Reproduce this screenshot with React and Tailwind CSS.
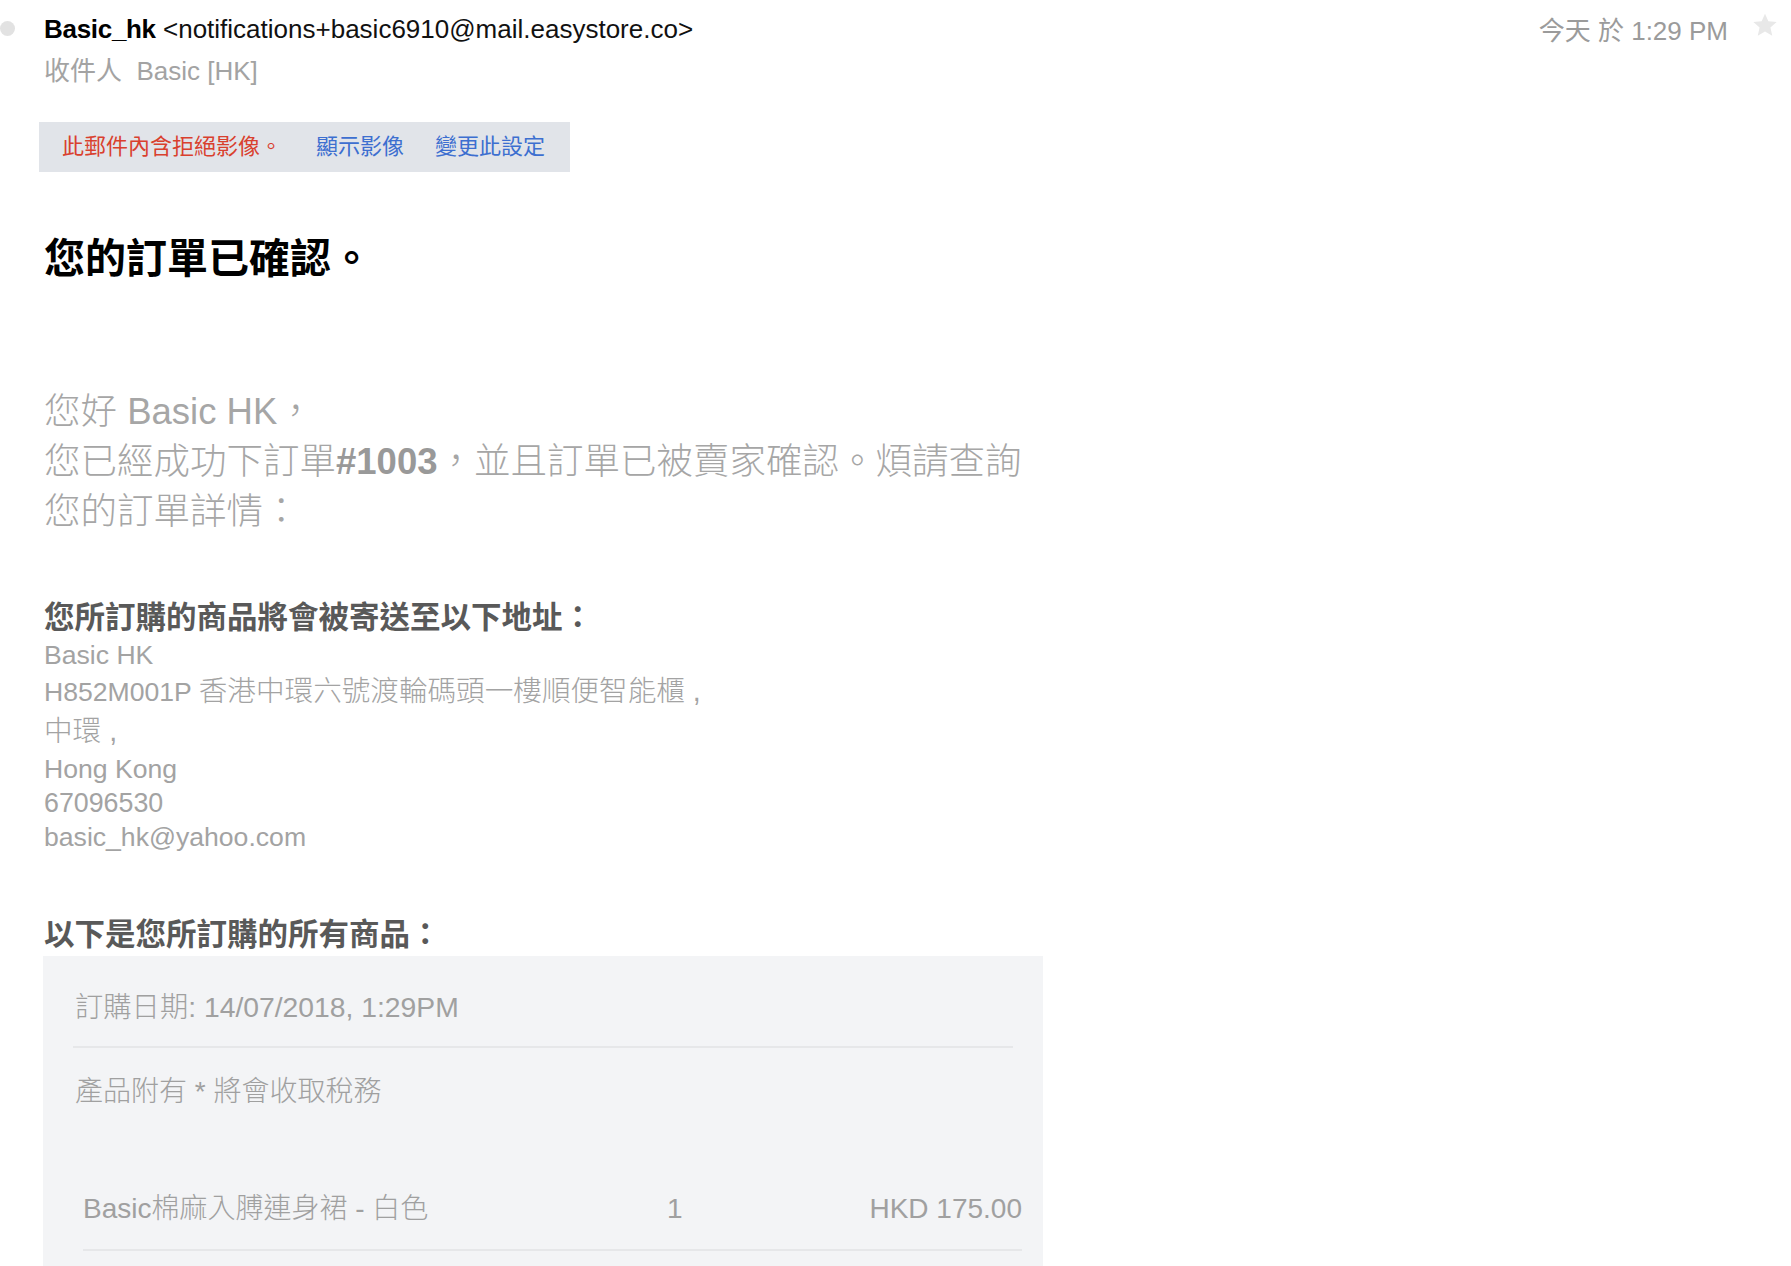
import React from "react";

function Star() {
  return (
    <svg width="26" height="26" viewBox="0 0 24 24" className="block">
      <path
        d="M12 1.5l3.1 7.1 7.7.7-5.8 5.1 1.7 7.6L12 18l-6.7 4 1.7-7.6-5.8-5.1 7.7-.7z"
        fill="#e8e8e8"
      />
    </svg>
  );
}

export default function App() {
  return (
    <div className="min-h-screen w-full bg-white font-['Liberation_Sans','Noto_Sans_CJK_TC',sans-serif] text-black">
      {/* Header */}
      <div className="flex items-start">
        <div className="w-[44px] shrink-0 pt-[21px]">
          <div className="h-[15px] w-[15px] rounded-full bg-[#e2e2e2]" />
        </div>
        <div className="flex-1">
          <div className="mt-[14px] h-[30px] text-[26px] leading-[30px] whitespace-nowrap">
            <span className="font-bold tracking-[-0.3px] text-black">Basic_hk</span>
            <span className="text-[#111]"> &lt;notifications+basic6910@mail.easystore.co&gt;</span>
          </div>
          <div className="mt-[10px] h-[34px] text-[26px] leading-[34px] text-[#a3a3a3] whitespace-nowrap">
            收件人 &nbsp;Basic [HK]
          </div>
        </div>
        <div className="flex items-start pr-[13px]">
          <div className="mt-[16px] text-[26px] leading-[30px] text-[#9b9b9b] whitespace-nowrap">
            今天 於 1:29 PM
          </div>
          <div className="ml-[24px] mt-[12px]">
            <Star />
          </div>
        </div>
      </div>

      {/* Content */}
      <div className="pl-[44px]">
        {/* Blocked images banner */}
        <div className="-ml-[5px] mt-[34px] flex h-[50px] w-[531px] items-center bg-[#e1e4e9] pl-[23px] text-[22px] leading-[30px] whitespace-nowrap">
          <span className="text-[#d9402e]">此郵件內含拒絕影像。</span>
          <span className="ml-[34px] text-[#3d6fd0]">顯示影像</span>
          <span className="ml-[31px] text-[#3d6fd0]">變更此設定</span>
        </div>

        {/* Title */}
        <h1 className="mt-[62px] h-[50px] text-[41px] font-bold leading-[50px] text-black">
          您的訂單已確認。
        </h1>

        {/* Greeting */}
        <div className="mt-[103px] text-[36.5px] font-light leading-[50px] text-[#a6a6a6] whitespace-nowrap">
          <div className="h-[50px]">您好 Basic HK，</div>
          <div className="h-[50px]">
            您已經成功下訂單<span className="font-bold text-[#999]">#1003</span>，並且訂單已被賣家確認。煩請查詢
          </div>
          <div className="h-[50px]">您的訂單詳情：</div>
        </div>

        {/* Shipping address */}
        <h2 className="mt-[60px] h-[40px] text-[30.5px] font-bold leading-[40px] text-[#595959]">
          您所訂購的商品將會被寄送至以下地址：
        </h2>
        <div className="text-[28.6px] font-light text-[#a3a3a3] whitespace-nowrap">
          <div className="h-[35px] leading-[35px]"><span className="text-[26.6px]">Basic HK</span></div>
          <div className="h-[39px] leading-[39px]">
            <span className="text-[26.6px]">H852M001P </span>香港中環六號渡輪碼頭一樓順便智能櫃 ,
          </div>
          <div className="h-[40px] leading-[40px]">中環 ,</div>
          <div className="h-[35px] leading-[35px]"><span className="text-[26.6px]">Hong Kong</span></div>
          <div className="h-[33px] leading-[33px]"><span className="text-[26.8px]">67096530</span></div>
          <div className="h-[35px] leading-[35px]"><span className="text-[26.6px]">basic_hk@yahoo.com</span></div>
        </div>

        {/* Items */}
        <h2 className="mt-[60px] h-[40px] text-[30.5px] font-bold leading-[40px] text-[#595959]">
          以下是您所訂購的所有商品：
        </h2>
        <div className="-ml-[1px] mt-[2px] w-[1000px] bg-[#f3f4f6] px-[30px] pt-[31px] pb-[80px] text-[28px] font-light text-[#a0a0a0]">
          <div className="h-[40px] pl-[2px] text-[28.3px] leading-[40px] whitespace-nowrap">訂購日期: 14/07/2018, 1:29PM</div>
          <div className="mt-[19px] h-[2px] bg-[#e6e7e9]" />
          <div className="mt-[24px] h-[40px] pl-[2px] leading-[40px] whitespace-nowrap">產品附有 * 將會收取稅務</div>

          <div className="ml-[10px] -mr-[9px] mt-[77px] border-b-2 border-[#e6e7e9] pb-[20px]">
            <div className="flex h-[40px] leading-[40px] whitespace-nowrap">
              <div className="w-[584px]">Basic棉麻入膊連身裙 - 白色</div>
              <div>1</div>
              <div className="flex-1 text-right">HKD 175.00</div>
            </div>
          </div>
        </div>
      </div>
    </div>
  );
}
